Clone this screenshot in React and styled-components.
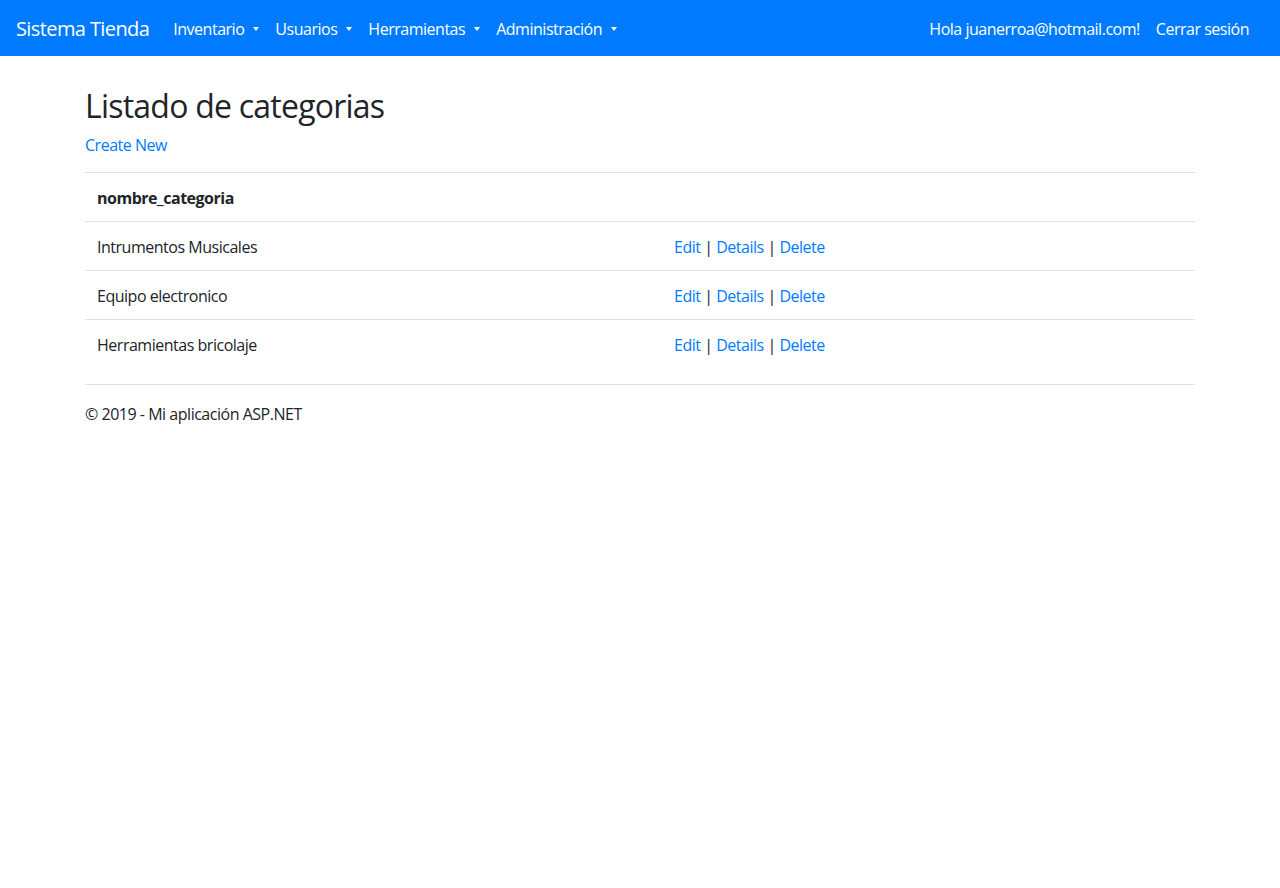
import styled, { createGlobalStyle } from "styled-components";

const Global = createGlobalStyle`
  body {
    margin: 0;
    font-family: "Segoe UI", "Open Sans", "Noto Sans", sans-serif;
    font-size: 16px;
    line-height: 1.5;
    letter-spacing: -0.48px;
    color: #212529;
    background: #fff;
  }
  a {
    color: #007bff;
    text-decoration: none;
  }
`;

const Navbar = styled.nav`
  height: 56px;
  box-sizing: border-box;
  padding: 9px 16px 7px;
  background-color: #007bff;
  display: flex;
  align-items: center;
  justify-content: space-between;
`;

const Brand = styled.a`
  color: #fff;
  font-size: 20px;
  line-height: 30px;
  letter-spacing: -0.6px;
  margin-right: 16px;
  white-space: nowrap;
`;

const NavList = styled.ul`
  display: flex;
  align-items: center;
  list-style: none;
  margin: 0;
  padding: 0;
  margin-right: ${(p) => (p.right ? "7px" : "0")};
`;

const NavLink = styled.a`
  display: block;
  color: #fff;
  padding: 8px;
  white-space: nowrap;

  &.dropdown::after {
    content: "";
    display: inline-block;
    margin-left: 9px;
    vertical-align: 4px;
    border-top: 4px solid;
    border-right: 3.5px solid transparent;
    border-left: 3.5px solid transparent;
    border-bottom: 0;
  }
`;

const Left = styled.div`
  display: flex;
  align-items: center;
`;

const Container = styled.div`
  max-width: 1110px;
  margin: 0 auto;
  padding: 0 15px;
`;

const Main = styled.main`
  padding-top: 29px;
`;

const Heading = styled.h2`
  font-size: 32px;
  font-weight: 400;
  line-height: 1.2;
  letter-spacing: -0.77px;
  padding-top: 2px;
  margin: 0 0 7px;
`;

const Para = styled.p`
  padding-top: 1px;
  margin: 0 0 15px;
`;

const Table = styled.table`
  width: 100%;
  border-collapse: collapse;
  margin-bottom: 16px;

  th,
  td {
    padding: 13px 12px 11px;
    border-top: 1px solid #dee2e6;
    text-align: left;
    vertical-align: top;
  }

  th {
    font-weight: 700;
  }
`;

const NameCell = styled.td`
  width: 553px;
`;

const Sep = styled.span`
  color: #212529;
`;

const Footer = styled.footer`
  border-top: 1px solid #dee2e6;
  line-height: 58px;
  padding-bottom: 2px;
  white-space: nowrap;
`;

const categorias = [
  "Intrumentos Musicales",
  "Equipo electronico",
  "Herramientas bricolaje",
];

const menus = ["Inventario", "Usuarios", "Herramientas", "Administración"];

export default function App() {
  return (
    <>
      <Global />
      <Navbar>
        <Left>
          <Brand href="#">Sistema Tienda</Brand>
          <NavList>
            {menus.map((m) => (
              <li key={m}>
                <NavLink href="#" className="dropdown">
                  {m}
                </NavLink>
              </li>
            ))}
          </NavList>
        </Left>
        <NavList right>
          <li>
            <NavLink href="#">Hola juanerroa@hotmail.com!</NavLink>
          </li>
          <li>
            <NavLink href="#">Cerrar sesión</NavLink>
          </li>
        </NavList>
      </Navbar>

      <Container>
        <Main>
          <Heading>Listado de categorias</Heading>
          <Para>
            <a href="#">Create New</a>
          </Para>
          <Table>
            <thead>
              <tr>
                <th>nombre_categoria</th>
                <th></th>
              </tr>
            </thead>
            <tbody>
              {categorias.map((c) => (
                <tr key={c}>
                  <NameCell>{c}</NameCell>
                  <td>
                    <a href="#">Edit</a> <Sep>|</Sep>{" "}
                    <a href="#">Details</a> <Sep>|</Sep>{" "}
                    <a href="#">Delete</a>
                  </td>
                </tr>
              ))}
            </tbody>
          </Table>
        </Main>
        <Footer>© 2019 - Mi aplicación ASP.NET</Footer>
      </Container>
    </>
  );
}
